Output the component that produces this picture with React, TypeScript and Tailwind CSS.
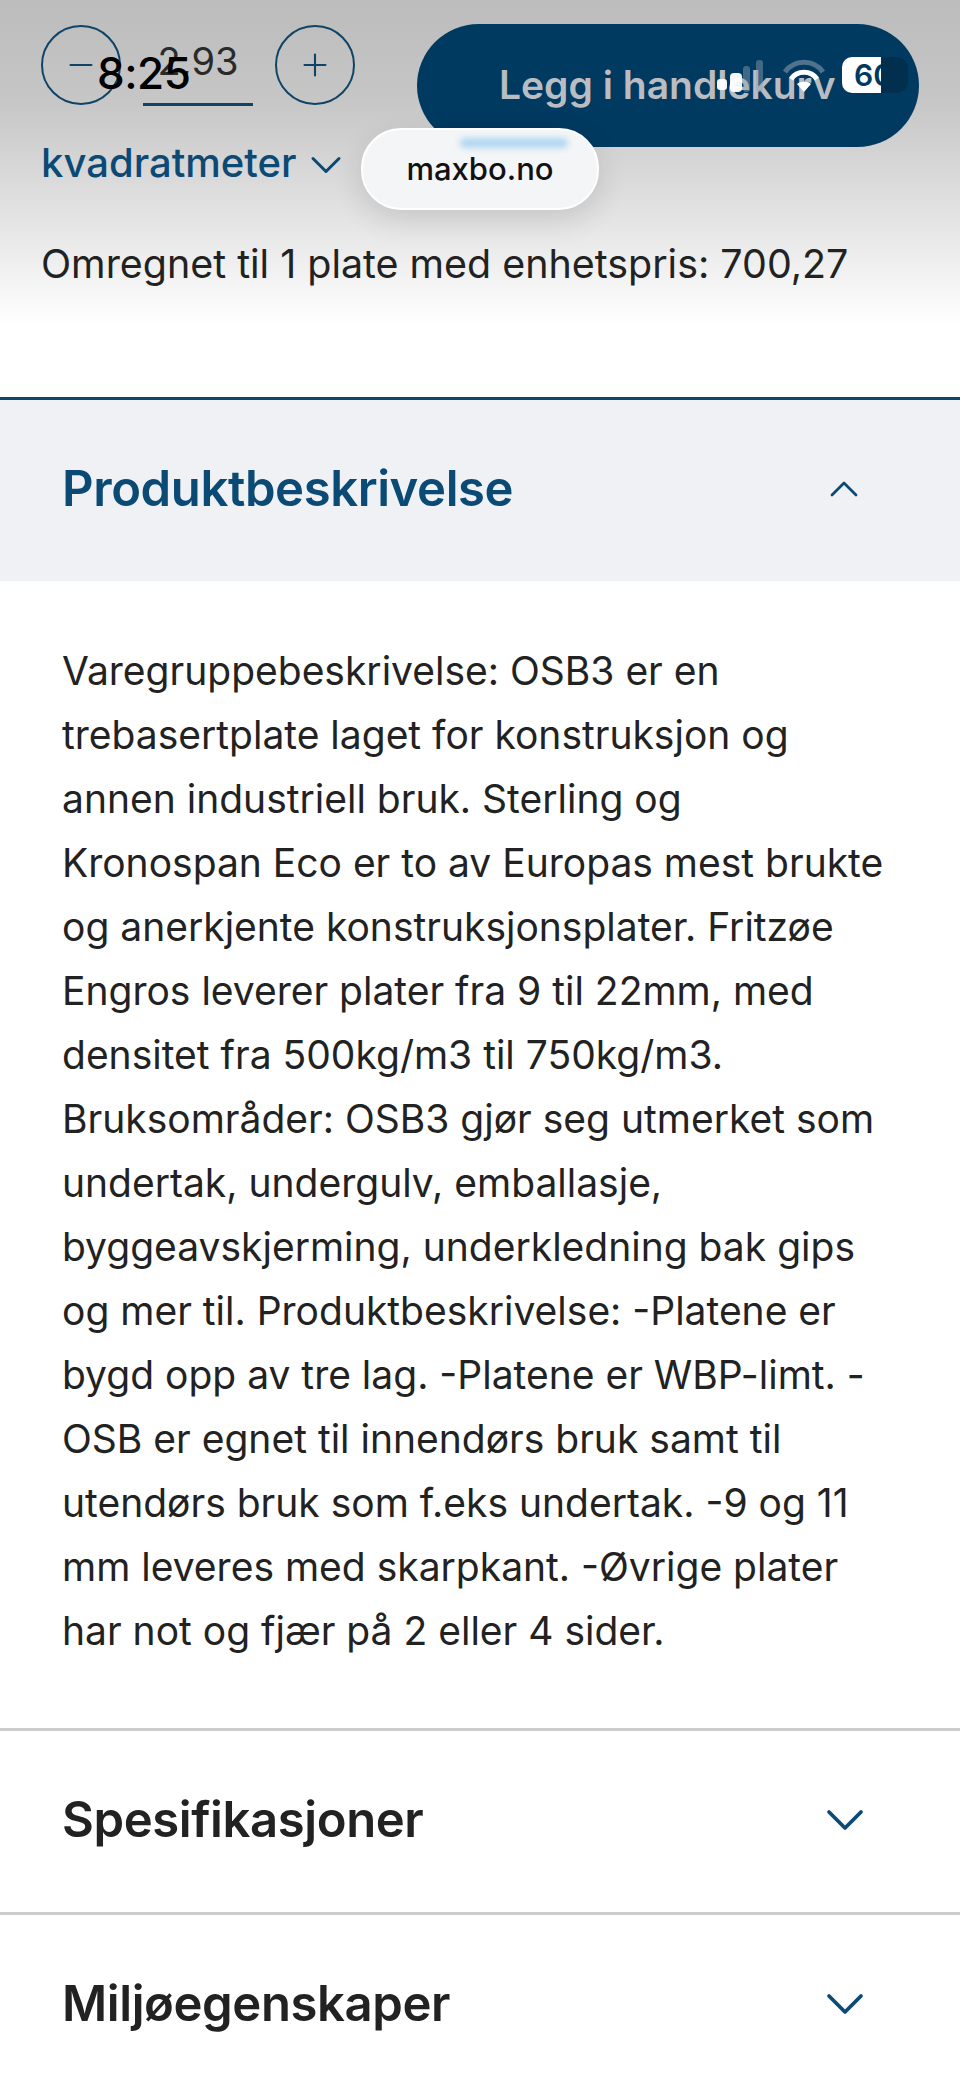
import { Minus, Plus, ChevronDown, ChevronUp } from 'lucide-react';

const descriptionLines = [
  'Varegruppebeskrivelse: OSB3 er en',
  'trebasertplate laget for konstruksjon og',
  'annen industriell bruk. Sterling og',
  'Kronospan Eco er to av Europas mest brukte',
  'og anerkjente konstruksjonsplater. Fritzøe',
  'Engros leverer plater fra 9 til 22mm, med',
  'densitet fra 500kg/m3 til 750kg/m3.',
  'Bruksområder: OSB3 gjør seg utmerket som',
  'undertak, undergulv, emballasje,',
  'byggeavskjerming, underkledning bak gips',
  'og mer til. Produktbeskrivelse: -Platene er',
  'bygd opp av tre lag. -Platene er WBP-limt. -',
  'OSB er egnet til innendørs bruk samt til',
  'utendørs bruk som f.eks undertak. -9 og 11',
  'mm leveres med skarpkant. -Øvrige plater',
  'har not og fjær på 2 eller 4 sider.',
];

function StatusBar() {
  return (
    <>
      <span className="absolute left-[97px] top-[46px] text-[44px] leading-[54px] font-medium text-black tracking-[-0.5px]">8:25</span>
      {/* signal, wifi and battery sit on top of the button */}
      <svg className="absolute left-[716px] top-[58px]" width="52" height="36" viewBox="0 0 52 36">
        <rect x="27" y="8" width="7" height="26" rx="3" fill="#8fa3b5" opacity="0.45" />
        <rect x="40" y="2" width="7" height="32" rx="3" fill="#8fa3b5" opacity="0.45" />
        <rect x="1" y="21" width="10" height="11" rx="3" fill="#fff" opacity="0.95" />
        <rect x="14" y="15" width="12" height="19" rx="4" fill="#fff" opacity="0.95" />
      </svg>
      <svg className="absolute left-[782px] top-[58px]" width="44" height="36" viewBox="0 0 44 36" fill="none">
        <path d="M3 14C12 1 32 1 41 14" stroke="#8fa3b5" strokeOpacity="0.55" strokeWidth="5" />
        <path d="M9 21C15 12 29 12 35 21" stroke="#fff" strokeWidth="5" />
        <path d="M22 34L15 26C18 23 26 23 29 26Z" fill="#fff" />
      </svg>
      <div className="absolute left-[842px] top-[57px] flex h-[36px]">
        <div className="w-[39px] h-full bg-white rounded-l-[10px] pl-[12px] text-[30px] leading-[36px] font-semibold text-[#003a60] overflow-hidden">60</div>
        <div className="w-[27px] h-full bg-[#032f4e] rounded-r-[12px]" />
      </div>
    </>
  );
}

function AddressPill() {
  return (
    <div className="absolute left-[361px] top-[128px] w-[238px] h-[82px] rounded-[40px] bg-[#f4f5f7] border-2 border-white shadow-[0_10px_30px_rgba(0,0,0,0.12)] flex items-center justify-center overflow-hidden">
      <div className="absolute left-[97px] top-[8px] w-[108px] h-[10px] rounded-full bg-[#aed6f3] blur-[3px]" />
      <span className="text-[31px] text-[#111] font-medium">maxbo.no</span>
    </div>
  );
}

function AccordionRow({ title }: { title: string }) {
  return (
    <div className="h-[184px] border-t-[3px] border-[#cccccc] pl-[62px] pr-[83px] pb-[3px] flex items-center justify-between">
      <h2 className="text-[49px] font-semibold text-[#222222] tracking-[-0.4px]">{title}</h2>
      <ChevronDown className="w-[64px] h-[64px] text-[#0b4a75]" strokeWidth={1.4} />
    </div>
  );
}

export default function App() {
  return (
    <div className="relative w-[960px] h-[2079px] overflow-hidden bg-white font-['Inter',sans-serif]">
      {/* Sticky buy bar */}
      <div className="h-[397px] bg-gradient-to-b from-[#bcbcbc] via-[#c6c6c6] via-25% to-white to-82% pl-[41px] pt-[24px]">
        <div className="flex items-start">
          <div>
            <div className="flex items-center h-[82px]">
              <button className="w-[80px] h-[80px] rounded-full border-[2.5px] border-[#0f4467] flex items-center justify-center text-[#0f4467]">
                <Minus className="w-[36px] h-[36px]" strokeWidth={1.4} />
              </button>
              <div className="w-[110px] h-[82px] mx-[22px] border-b-[3px] border-[#0f4467] text-center text-[38px] leading-[74px] text-[#2a2a2a]">2,93</div>
              <button className="w-[80px] h-[80px] rounded-full border-[2.5px] border-[#0f4467] flex items-center justify-center text-[#0f4467]">
                <Plus className="w-[36px] h-[36px]" strokeWidth={1.4} />
              </button>
            </div>
            <div className="mt-[29px] flex items-center gap-[4px] text-[#0b4a75] text-[40px] leading-[50px] font-medium">
              kvadratmeter
              <ChevronDown className="w-[52px] h-[52px] mt-[4px]" strokeWidth={1.4} />
            </div>
          </div>
          <button className="ml-[62px] w-[502px] h-[123px] rounded-[62px] bg-[#003a60] text-[#b9bdc2] text-[39px] font-semibold text-left pl-[82px] pr-[30px]">
            Legg i handlekurv
          </button>
        </div>
        <p className="mt-[48px] text-[39.4px] leading-[50px] text-[#222222]">Omregnet til 1 plate med enhetspris: 700,27</p>
      </div>

      {/* Open accordion section */}
      <div className="h-[184px] border-t-[3px] border-[#0f4767] bg-[#eff1f5] pl-[62px] pr-[92px] pb-[3px] flex items-center justify-between">
        <h2 className="text-[49px] font-semibold text-[#0b4a75] tracking-[-0.4px]">Produktbeskrivelse</h2>
        <ChevronUp className="w-[48px] h-[48px] text-[#0b4a75]" strokeWidth={1.4} />
      </div>
      <div className="h-[1147px] pl-[62px] pt-[58px] text-[39px] leading-[64px] text-[#222222]">
        {descriptionLines.map((line) => (
          <div key={line} className="whitespace-nowrap">{line}</div>
        ))}
      </div>

      <AccordionRow title="Spesifikasjoner" />
      <AccordionRow title="Miljøegenskaper" />

      <StatusBar />
      <AddressPill />
    </div>
  );
}
